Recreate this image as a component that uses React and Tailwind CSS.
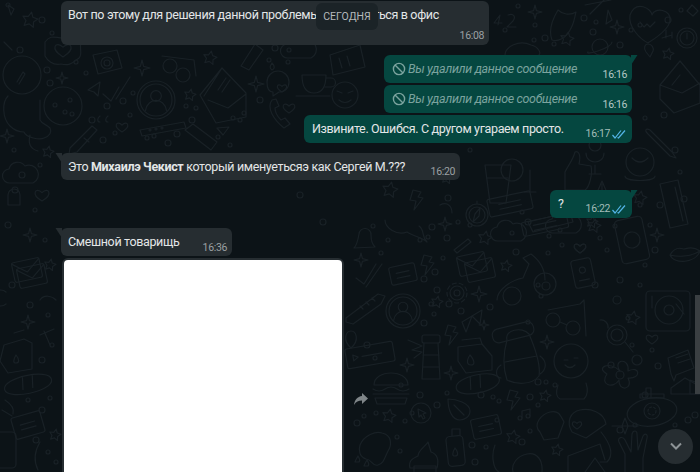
import React from "react";

const S = "#192126";

function Star({ x, y, r = 7 }) {
  const pts = [];
  for (let i = 0; i < 10; i++) {
    const a = -Math.PI / 2 + (i * Math.PI) / 5 + 0.2;
    const q = i % 2 ? r * 0.5 : r;
    pts.push(`${(x + q * Math.cos(a)).toFixed(1)},${(y + q * Math.sin(a)).toFixed(1)}`);
  }
  return <polygon points={pts.join(" ")} />;
}
function Spark({ x, y, r = 8 }) {
  const k = r * 0.2;
  return <path d={`M${x} ${y - r}L${x + k} ${y - k}L${x + r} ${y}L${x + k} ${y + k}L${x} ${y + r}L${x - k} ${y + k}L${x - r} ${y}L${x - k} ${y - k}Z`} />;
}
function Heart({ x, y, s = 6 }) {
  return <path d={`M${x} ${y + s}C${x - 2 * s} ${y - 0.2 * s} ${x - s} ${y - 1.4 * s} ${x} ${y - 0.4 * s}C${x + s} ${y - 1.4 * s} ${x + 2 * s} ${y - 0.2 * s} ${x} ${y + s}Z`} />;
}
function Cloud({ x, y }) {
  return <path d={`M${x - 12} ${y + 8}a7 7 0 0 1-1-14a9 9 0 0 1 16-3a8 8 0 0 1 8 17z`} />;
}
function Note({ x, y, w = 26, h = 18, a = -12 }) {
  return (
    <g transform={`rotate(${a} ${x} ${y})`}>
      <rect x={x - w / 2} y={y - h / 2} width={w} height={h} rx="2" />
      <path d={`M${x - w / 4} ${y - 2}H${x + w / 4}M${x - w / 4} ${y + 3}H${x + w / 4}`} />
    </g>
  );
}
function Bolt({ x, y }) {
  return <path d={`M${x - 2} ${y - 10}l8 2l-3 5l5 1l-9 12l2-9l-6-1z`} />;
}
function Person({ x, y, r = 18 }) {
  return (
    <g>
      <circle cx={x} cy={y} r={r} />
      <circle cx={x} cy={y} r={r - 3} />
      <circle cx={x} cy={y - 4} r={r * 0.28} />
      <path d={`M${x - r * 0.55} ${y + r * 0.55}c${r * 0.1}-${r * 0.7} ${r}-${r * 0.7} ${r * 1.1} 0`} />
    </g>
  );
}
function Envelope({ x, y }) {
  return (
    <g transform={`rotate(-12 ${x} ${y})`}>
      <rect x={x - 14} y={y - 10} width={28} height={20} rx="2" />
      <path d={`M${x - 14} ${y - 9}l14 11l14-11`} />
    </g>
  );
}

const dots = [
  [432, 227, 3], [428, 237, 2], [458, 222, 2], [447, 238, 3], [443, 258, 2], [435, 272, 3], [424, 279, 3], [437, 290, 3],
  [373, 226, 2], [381, 253, 2], [388, 240, 2], [512, 233, 2], [516, 252, 3], [560, 230, 2], [562, 245, 2], [548, 253, 2],
  [549, 236, 2], [600, 238, 2], [607, 250, 2], [595, 285, 3], [541, 296, 2], [538, 285, 2], [528, 322, 2], [449, 304, 3],
  [431, 304, 2], [424, 323, 3], [434, 314, 2], [461, 311, 3], [490, 307, 3], [367, 345, 3], [375, 358, 2], [401, 385, 2],
  [420, 395, 3], [437, 405, 3], [447, 393, 2], [481, 395, 3], [493, 397, 2], [499, 401, 2], [538, 382, 3], [546, 382, 2],
  [530, 397, 3], [538, 405, 2], [555, 385, 2], [530, 431, 2], [522, 442, 3], [497, 420, 2], [486, 447, 2], [472, 445, 3],
  [475, 462, 3], [397, 437, 2], [400, 451, 2], [357, 423, 3], [364, 416, 2], [376, 413, 2], [405, 421, 2], [412, 413, 2],
  [617, 300, 4], [628, 318, 2], [637, 360, 5], [611, 365, 3], [645, 395, 3], [652, 350, 2], [658, 366, 3], [632, 345, 2],
  [688, 420, 3], [695, 415, 3], [675, 425, 2], [635, 425, 2], [620, 430, 3], [47, 70, 3], [50, 83, 3], [86, 73, 2],
  [76, 62, 2], [107, 106, 3], [130, 115, 2], [123, 101, 3], [133, 93, 2], [92, 120, 3], [103, 140, 3], [115, 133, 2],
  [147, 138, 2], [154, 136, 2], [168, 143, 3], [177, 134, 3], [192, 120, 3], [186, 106, 2], [196, 108, 2], [233, 118, 2],
  [244, 113, 2], [260, 100, 3], [269, 60, 2], [275, 48, 3], [288, 62, 2], [289, 50, 2], [240, 120, 2], [218, 137, 2],
  [230, 145, 2], [300, 195, 3], [323, 222, 3], [420, 240, 2], [470, 225, 2], [518, 6, 2], [505, 30, 2], [535, 25, 2],
  [534, 40, 2], [545, 38, 3], [554, 44, 2], [584, 18, 3], [596, 22, 2], [593, 32, 3], [620, 45, 3], [631, 30, 2],
  [640, 25, 2], [668, 20, 3], [681, 10, 2], [470, 150, 2], [448, 198, 3], [522, 212, 2], [528, 222, 3], [600, 200, 2],
  [615, 226, 2], [660, 205, 3], [650, 225, 2], [675, 150, 3], [664, 115, 3], [645, 118, 2], [680, 172, 2], [640, 205, 2],
  [655, 250, 3], [645, 265, 2], [620, 280, 3], [640, 285, 2], [8, 5, 2], [52, 33, 2], [20, 50, 3], [42, 20, 3],
  [14, 150, 2], [22, 175, 3], [40, 165, 2], [15, 190, 3], [35, 210, 2], [8, 225, 3], [45, 240, 2], [12, 285, 3],
  [30, 305, 3], [48, 315, 2], [52, 345, 2], [42, 360, 3], [28, 400, 2], [42, 410, 3], [50, 398, 2], [36, 440, 3],
  [48, 452, 2], [56, 462, 2],
];

function Doodles() {
  return (
    <svg className="absolute inset-0" width="700" height="472" fill="none" stroke={S} strokeWidth="1.2" strokeLinejoin="round" strokeLinecap="round">
      {dots.map(([x, y, r], i) => <circle key={i} cx={x} cy={y} r={r} />)}

      {/* lower middle, right of the picture */}
      <path d="M354 248c3-3 4-8 5-14a6 6 0 0 1 12 1c0 6 2 10 4 12z" />
      <path d="M385 220c0 8 12 16 22 12c6 4 16 6 20 10c-6-6-2-12-8-16" />
      <Spark x={445} y={224} r={7} />
      <path d="M454 250l14-11l3 3l-14 11z" />
      <Star x={485} y={238} /><Cloud x={510} y={233} />
      <path d="M528 222l42-10l3 10l-40 10z" /><Star x={594} y={226} />
      <Spark x={361} y={260} r={7} />
      <path d="M356 278l8 6l12-20M366 287l16-23" />
      <Note x={403} y={274} /><Bolt x={426} y={265} />
      <Envelope x={472} y={264} /><Envelope x={480} y={270} />
      <Star x={506} y={266} r={6} />
      <path d="M497 300c0-10 14-20 26-22l6-14l-6-6l8-4c8 6 14 14 14 26" />
      <circle cx="545" cy="284" r="11" /><circle cx="546" cy="286" r="4" /><circle cx="512" cy="296" r="9" />
      <Heart x={580} y={248} s={5} />
      <g transform="rotate(-12 583 273)"><rect x="573" y="259" width="20" height="28" rx="3" /><circle cx="583" cy="270" r="3" /><path d="M578 280h10" /></g>
      <path d="M346 318l32-24l7 2l-4 8l-28 20l-7-2zM360 306l3 3M366 302l3 3M372 298l3 3" />
      <Person x={403} y={311} r={17} />
      <Star x={437} y={302} r={6} />
      <circle cx="457" cy="293" r="7" /><circle cx="457" cy="293" r="3" /><circle cx="457" cy="293" r="10" strokeDasharray="4 3" />
      <Spark x={479} y={294} r={8} />
      <path d="M462 322l20-12l-2 14l-8-8l-6 16z" /><Spark x={484} y={325} r={5} />
      <circle cx="553" cy="320" r="7" /><circle cx="573" cy="328" r="7" /><path d="M548 310l32-6l4-4l2 36M560 322l7 3" />
      <path d="M351 348c-9-8-5-17 0-17s9 9 0 17z" />
      <g transform="rotate(-10 370 355)"><rect x="346" y="345" width="48" height="20" rx="2" /><path d="M353 352v6l5-3zM362 355h20" /></g>
      <path d="M408 340l14 6l-10 4l10 2l-8 6" /><rect x="422" y="335" width="18" height="8" rx="2" /><path d="M424 343l-2 36h18l-2-36M423 355h16M423 367h16" />
      <Bolt x={450} y={335} />
      <path d="M458 347l24-3l10 12l0 14l-26 3l-8-12zM462 340l18-2l2 6M470 355c-4 6-3 10 1 10c4 0 4-4-1-10z" />
      <g transform="rotate(-14 515 340)"><rect x="494" y="325" width="42" height="14" rx="6" /></g>
      <path d="M507 340c-3-10 15-14 22-6c6 14 12 30 10 42c-8 10-24 8-32 4c-4-12-4-26 0-40zM505 362l32-6" />
      <path d="M501 365c-6 4-6 12 0 13M540 356c8 6 6 14 0 18" />
      <Spark x={547} y={342} r={7} />
      <circle cx="571" cy="361" r="17" /><path d="M558 385c-2 6-2 12 2 14h24c4-4 4-10 2-16M564 360h4M574 358h4M565 365q5 5 10 0" />
      <Spark x={407} y={365} r={7} />
      <Spark x={451} y={373} r={7} />
      <path d="M374 385c0-16 34-16 34 0zM373 389q6 4 12 0t12 0t12 0M373 394h36M375 398h32l-2 6h-28z" />
      <g transform="rotate(-12 477 385)"><path d="M456 384c0-12 44-12 44 0s-44 12-44 0zM472 376l-2 12M482 376l-2 12" /></g>
      <Bolt x={512} y={400} /><Star x={545} y={396} r={6} />
      <path d="M448 399c8 0 22 4 22 12c0 6-6 9-10 9c-8 0-12-10-12-21zM454 405l10 10" />
      <circle cx="421" cy="413" r="10" /><path d="M418 409l8 4l-3 1l2 4l-2 1l-2-4l-2 2z" />
      <Star x={389} y={416} /><path d="M522 418l0-7l8-2v7" /><circle cx="520" cy="418" r="2" /><circle cx="528" cy="416" r="2" />
      <Note x={486} y={427} w={28} h={20} />
      <Star x={513} y={437} />
      <path d="M540 432c-8-8 2-18 10-20c8-2 10 2 14 10l-6 16l-14 2zM572 432c-6-10-2-20 8-22c10-2 24 2 26 14l-20 14z" /><Heart x={577} y={425} s={4} />
      <path d="M410 468c-2-8 4-10 8-12c0-6 8-10 10-14l3 10c6 2 8 8 6 16z" /><path d="M414 472v-6h22v6" />
      <rect x="447" y="436" width="17" height="30" rx="4" transform="rotate(-6 455 450)" /><path d="M452 436v-7h8v7M455 448c-3 5-3 8 0 8s4-3 0-8z" />
      <path d="M360 445c4-10 16-14 22-12c10 2 10 12 6 18c-4 8-4 12-10 14c-6 2-6-6-12-6c-6-2-8-8-6-14z" />
      <path d="M355 462c1-3 2-4 3-6c1 2 3 4 1 6zM364 466c1-3 2-4 3-6c1 2 3 4 1 6z" />
      <path d="M495 445c-4 10-2 24 4 27M513 472c-2-8 4-16 14-18c10-2 16 6 15 18" />
      <Star x={557} y={450} r={6} />
      <path d="M568 472l0-16l32-12l5 16" /><path d="M585 472l10-14l10 14" />

      {/* right strip */}
      <rect x="646" y="291" width="44" height="40" rx="4" />
      <circle cx="669" cy="310" r="14" /><circle cx="669" cy="310" r="5" />
      <path d="M652 296v12M676 304l8 10" />
      <circle cx="617" cy="335" r="10" /><circle cx="617" cy="335" r="6" /><path d="M625 342l8 10" />
      <path d="M600 320a7 7 0 0 1 8 8" />
      <Star x={633} y={318} r={7} />
      <Heart x={652} y={339} s={5} />
      <circle cx="620" cy="375" r="4" />
      <path d="M620 371c-8-12 10-14 8 0c12-6 14 8 0 7c6 12-10 14-9 2c-6 10-20 4-12-6c-12-6 2-14 13-3z" />
      <ellipse cx="652" cy="412" rx="25" ry="14" transform="rotate(-8 652 412)" />
      <circle cx="652" cy="411" r="8" /><circle cx="652" cy="411" r="4" strokeDasharray="2 2" />
      <path d="M646 398v-10h5v10M640 398h24v-4h-24z" />
      <path d="M668 358l20-8l6 18l-18 7l-2 6l-3-7z" /><path d="M676 358l12-4M678 363l12-4" />
      <path d="M671 388l14-10l14 8v8h-28z" />
      <path d="M625 472v-18l-6-12c-2-5 4-6 6-2l6 12l1-18c1-4 5-4 5 0l1 16l5-14c2-3 5-2 4 2l-4 20v14" />
      <path d="M625 418l-3 8l3 8l3-8zM612 426h26" />
      <path d="M601 432c8 10 14 22 6 30h-7" />
      <path d="M690 380l10 4v10h-10z" />

      {/* upper right */}
      <path d="M660 85l20-24l20 24v18l-26 10l-14-14zM672 85l8-10M660 85l22 8l18-10" />
      <path d="M650 130l22 22l4 6l-6-2l-22-22c-4-4-2-6 2-4z" />
      <circle cx="595" cy="145" r="6" /><path d="M586 153c0 12 18 12 18 0M595 165v8M589 174h12" />
      <circle cx="640" cy="162" r="14" /><path d="M625 176c0 6 30 6 30 0M632 158q8 8 16 0" />
      <path d="M565 172c4-8 8-12 10-20c4-2 6 4 4 12l12 2c2 8-2 22-6 24h-20z" />
      <path d="M485 165h26l-5 38h-16zM487 178h21" /><circle cx="512" cy="170" r="11" /><path d="M530 170v22M524 192h12" />
      <path d="M596 195l6-14l6 14M602 184v16" />
      <circle cx="477" cy="215" r="11" /><circle cx="477" cy="215" r="8" /><path d="M480 208l-5 6l-2 8l6-6z" /><path d="M477 204v-3" />
      <Note x={510} y={204} w={44} h={18} /><Note x={545} y={225} w={46} h={14} />
      <g transform="rotate(-12 632 240)"><rect x="618" y="218" width="28" height="44" rx="4" /><circle cx="632" cy="240" r="8" /></g>
      <path d="M678 180l10 44l-18 4l-10-44zM675 187l8 34" /><circle cx="684" cy="199" r="3" />
      <Star x={640} y={198} r={7} /><Spark x={657} y={235} r={7} /><Star x={592} y={222} r={6} />
      <path d="M670 255c6-10 12-6 14-6s8-4 16 2c-4 12-26 14-30 4zM670 255c8 2 20 2 30-4" />
      <Heart x={580} y={248} s={5} /><Cloud x={565} y={225} />
      <path d="M440 205c8-4 12 2 12 8" /><Star x={390} y={190} r={8} /><Bolt x={415} y={200} />
      <Star x={447} y={178} r={6} />

      {/* around first bubbles */}
      <path d="M330 55l30-10l5 22l-32 8z" /><path d="M342 68l-3-10M350 66l-3-10" />
      <circle cx="345" cy="95" r="13" /><path d="M339 100q6 5 12 0M337 91l5 2M353 91l-5 2" />
      <path d="M302 75c0 14 6 18 12 18s12-4 12-18zM326 78h5a4 4 0 0 1 0 9h-6" /><path d="M296 96h34" />
      <Cloud x={300} y={50} />
      <path d="M498 25l2-10l-6 8h8M508 15c6-2 8 2 5 6l-6 6h9" />
      <Spark x={535} y={12} r={7} />
      <path d="M552 40c-4-10 0-20 6-30c4 4 12 6 18 2c-2 8-2 12-6 18c-4 8-12 12-18 10zM585 5l26-5M590 14l14-14" />
      <path d="M608 10l4 10l-6 4z" />
      <path d="M630 15c6-16 22-6 22 0c2-8 20-6 18 6c-2 10-16 18-22 22c-8-4-20-16-18-28zM640 22l4 5l3-3l3 3l5-5" />
      <Spark x={617} y={27} r={7} />
      <circle cx="600" cy="47" r="8" /><path d="M588 52c-4 4 24-4 24-10" /><Star x={567} y={39} r={7} />
      <path d="M505 55c0-8 14-16 26-10c8 2 10 8 8 10" /><path d="M648 44c-3 0 -5 4-2 8l4 5l3-6c1-3-1-7-5-7z" />
      <path d="M662 38l10-3M666 30v8M672 32v6" />
      <circle cx="687" cy="38" r="10" /><circle cx="687" cy="38" r="7" /><path d="M687 33v6" />
      <Star x={668} y={54} r={6} /><path d="M692 5l6 6l-5 5l-6-5z" />

      {/* left strip */}
      <circle cx="22" cy="75" r="19" /><path d="M17 82l6-10l2 2l-6 10" />
      <path d="M8 96c-6 6-6 22 2 30c4 4 8 6 14 6c2 6 16 8 20 6c6-2 8-6 6-10c-4-4-8-4-10-8v-20" />
      <path d="M45 42c6-8 10-4 18-4s12-2 18 4c-2 8 2 12-2 16c-8 6-10 8-18 6c-8 2-14-4-16-8z" /><Heart x={63} y={50} s={7} />
      <Spark x={62} y={78} r={6} /><Spark x={7} y={136} r={7} />
      <circle cx="63" cy="106" r="19" /><circle cx="55" cy="105" r="2" /><circle cx="70" cy="100" r="2" /><circle cx="65" cy="112" r="2" /><circle cx="72" cy="114" r="2" />
      <path d="M88 90l12-8l-2 14l-4-4z" />
      <path d="M103 94l8 7l8-14M116 99l14-22" />
      <path d="M93 55l24-5l5 18l-24 6z" /><circle cx="107" cy="63" r="6" /><circle cx="107" cy="63" r="3" />
      <Spark x={142} y={68} r={8} />
      <circle cx="170" cy="66" r="7" /><circle cx="183" cy="75" r="7" /><path d="M162 56l32 4l2 16" />
      <Star x={210} y={58} r={7} /><Star x={190} y={95} r={6} /><Star x={48} y={152} r={6} />
      <path d="M241 66l14-22l8 6l-14 20z" /><path d="M272 63c-2 3-3 5 0 7c3-1 3-4 0-7z" />
      <path d="M267 82a11 11 0 0 1 22 0c0 6-4 10-10 10l-6 4v-4c-4 0-6-4-6-10z" /><Heart x={282} y={88} s={4} />
      <Person x={156} y={100} r={19} />
      <path d="M222 68l24 25v24l-30 6l-16-28zM222 68l-18 28M208 100l20 8l18-14M218 90l8-12M222 92l8-12" />
      <Spark x={256} y={84} r={8} />
      <path d="M272 100c-6 8 2 20 12 28l6-4l-5-6l-4 2c-4-4-6-8-6-12l4-2l-3-7z" /><Heart x={289} y={108} s={5} />
      <Heart x={122} y={127} s={5} /><path d="M100 116c-3 2-3 6 0 6M108 116c-3 2-3 6 0 6" />
      <path d="M140 130l44-8l2 6l-44 8z" /><circle cx="150" cy="130" r="1" /><circle cx="156" cy="129" r="1" /><circle cx="162" cy="128" r="1" />
      <path d="M70 148l22-22l5 4l-20 22l-8 2zM84 138l5 4" />
      <path d="M185 130l8-6l24 18l-6 8z" /><path d="M217 128l12-1l-6 8z" />
      <path d="M30 135c-2 8 0 14 8 16" />

      {/* left lower */}
      <Envelope x={27} y={270} /><Envelope x={32} y={276} />
      <Star x={50} y={265} r={6} />
      <path d="M6 292a8 8 0 1 0 0 12" />
      <Spark x={28} y={322} r={7} />
      <path d="M14 333l10-3M4 345l20-6l8 4l0 26l-24 4l-8-12zM16 355c-3 5-3 8 0 8s4-3 0-8z" />
      <g transform="rotate(-12 30 384)"><path d="M4 384c0-12 48-12 48 0s-48 12-48 0zM24 376l-2 12M34 376l-2 12" /></g>
      <Note x={28} y={425} w={30} h={22} a={-16} />
      <path d="M5 400c6 4 10 8 8 14M2 410l10 6" />
      <rect x="-6" y="432" width="22" height="36" rx="4" />
      <path d="M38 470c-4-8-4-18 2-28" /><path d="M40 335l14-6M50 345l-6-14" />
      <path d="M40 300c4-6 12-4 16 0" />
      <Star x={55} y={435} r={6} />
      <path d="M8 5l6 4l-3 6zM12 50l-8-8" /><Star x={30} y={20} r={8} />
      <Cloud x={22} y={175} /><Spark x={30} y={235} r={7} />
      <path d="M8 195a6 6 0 0 1 12 0v10h-12z" /><Heart x={42} y={195} s={6} />
    </svg>
  );
}

function Tail({ side, color }) {
  return side === "right" ? (
    <svg className="absolute -right-[6px] top-0" width="7" height="10" viewBox="0 0 7 10"><path d="M0 0H6.500L0 10Z" fill={color} /></svg>
  ) : (
    <svg className="absolute -left-[6px] top-0" width="7" height="10" viewBox="0 0 7 10"><path d="M7 0H0.500L7 10Z" fill={color} /></svg>
  );
}

function Ticks() {
  return (
    <svg width="14" height="9" viewBox="0 0 14 9" fill="none" stroke="#53b4e6" strokeWidth="1.2" className="ml-[2px]">
      <path d="M0.500 5l2.500 3l6-7.500M5.500 7.500l1 .5l6.500-7.500" />
    </svg>
  );
}

function Meta({ children, ticks, color = "text-[#9ba0a3]" }) {
  return (
    <span className={`flex items-center self-end text-[10.5px] leading-[14px] tracking-[-0.35px] whitespace-nowrap ${color}`}>
      {children}
      {ticks && <Ticks />}
    </span>
  );
}

function Deleted({ tail }) {
  return (
    <div className="relative flex h-[28px] w-[248px] justify-between rounded-[6px] bg-[#054740] pt-[5px] pr-[5px] pb-[1px] pl-[8px]">
      {tail && <Tail side="right" color="#054740" />}
      <div className="flex text-[#7ba39e]">
        <svg width="14" height="14" viewBox="0 0 14 14" fill="none" stroke="#7ba39e" strokeWidth="1.4" className="mt-[2px] mr-[2px]">
          <circle cx="7" cy="7" r="5.600" /><path d="M3 3l8 8" />
        </svg>
        <span className="italic">Вы удалили данное сообщение</span>
      </div>
      <Meta color="text-[#b5c9c6]">16:16</Meta>
    </div>
  );
}

export default function App() {
  return (
    <div className="relative h-[472px] w-[700px] overflow-hidden bg-[#0c1317] text-[12.5px] leading-[18px] tracking-[-0.35px] text-[#e3e6e7] [font-family:Roboto,'Noto_Sans',sans-serif]">
      <Doodles />
      <div className="relative flex flex-col gap-[10px] pt-px pr-[68px] pl-[61px]">
        <div className="flex h-[44px] w-[428px] justify-between rounded-[6px] bg-[#262d31] pt-[5px] pr-[5px] pb-[2px] pl-[7px]">
          <span className="whitespace-nowrap">Вот по этому для решения данной проблемы — обратиться в офис</span>
          <Meta>16:08</Meta>
        </div>
        <div className="flex flex-col items-end gap-[2px]">
          <Deleted tail />
          <Deleted />
          <div className="flex h-[28px] w-[328px] justify-between rounded-[6px] bg-[#054740] pt-[5px] pr-[6px] pb-[2px] pl-[8px]">
            <span className="whitespace-nowrap">Извините. Ошибся. С другом угараем просто.</span>
            <Meta ticks color="text-[#a3bdb9]">16:17</Meta>
          </div>
        </div>
        <div className="relative flex h-[27px] w-[399px] justify-between rounded-[6px] bg-[#262d31] pt-[5px] pr-[5px] pb-[1px] pl-[7px]">
          <Tail side="left" color="#262d31" />
          <span className="whitespace-nowrap">Это <b className="font-bold">Михаилэ Чекист</b> который именуетьсяэ как Сергей М.???</span>
          <Meta>16:20</Meta>
        </div>
        <div className="flex justify-end">
          <div className="relative flex h-[28px] w-[82px] justify-between rounded-[6px] bg-[#054740] pt-[5px] pr-[6px] pb-[2px] pl-[8px]">
            <Tail side="right" color="#054740" />
            <span>?</span>
            <Meta ticks color="text-[#a3bdb9]">16:22</Meta>
          </div>
        </div>
        <div className="flex flex-col gap-[2px]">
          <div className="relative flex h-[28px] w-[171px] justify-between rounded-[6px] bg-[#262d31] pt-[5px] pr-[5px] pb-[1px] pl-[7px]">
            <Tail side="left" color="#262d31" />
            <span className="whitespace-nowrap">Смешной товарищь</span>
            <Meta>16:36</Meta>
          </div>
          <div className="ml-px flex items-center gap-[9px]">
            <div className="h-[282px] w-[282px] rounded-[6px] bg-[#262d31] p-[2px]">
              <div className="h-full w-full rounded-[4px] bg-white" />
            </div>
            <svg width="16" height="14" viewBox="0 0 16 14" fill="#7f8588">
              <path d="M9 1l6 5.500L9 12V8.600C5.500 8.600 3 9.800 1 13C1.600 8 4.500 4.500 9 4z" />
            </svg>
          </div>
        </div>
      </div>
      <div className="absolute top-[429px] left-[658px] flex h-[35px] w-[35px] items-center justify-center rounded-full bg-[#262d31]">
        <svg width="14" height="9" viewBox="0 0 14 9" fill="none" stroke="#8d9396" strokeWidth="2"><path d="M2 1.500l5 5 5-5" /></svg>
      </div>
      <div className="absolute top-[295px] left-[695px] h-[99px] w-[5px] bg-[#3a3f42]" />
      <div className="absolute top-[3px] left-[316px] flex h-[27px] w-[62px] items-center justify-center rounded-[6px] bg-[#1b2327] text-[10.5px] tracking-normal text-[#b5b9bb]">СЕГОДНЯ</div>
    </div>
  );
}
